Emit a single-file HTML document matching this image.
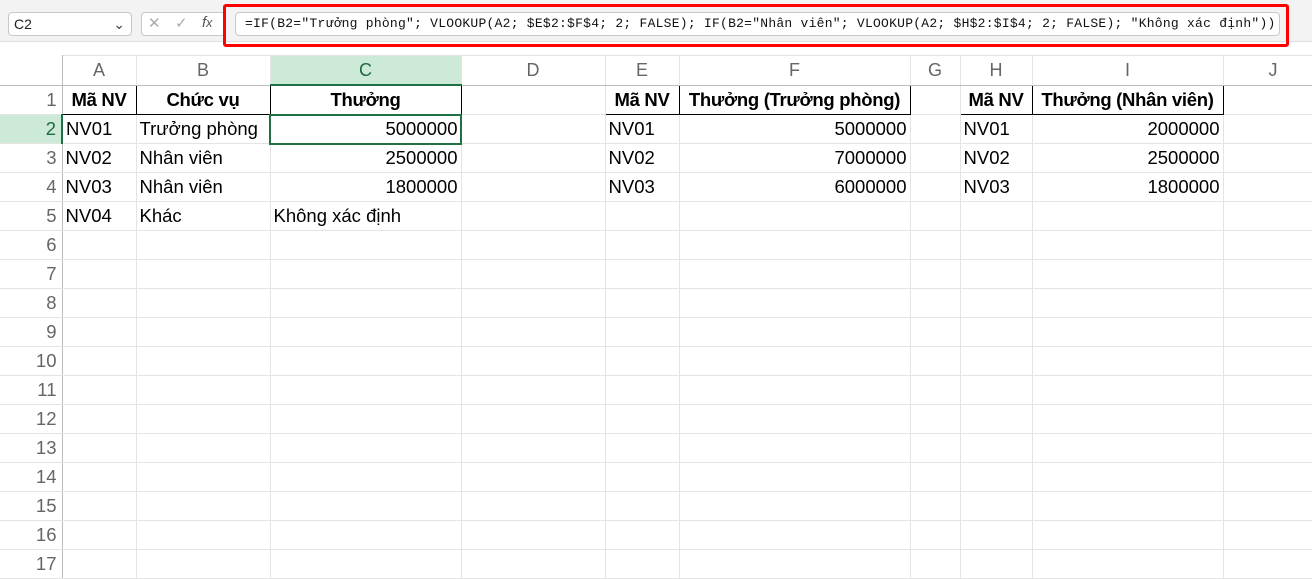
<!DOCTYPE html>
<html><head><meta charset="utf-8"><style>
body{margin:0;width:1312px;height:559px;overflow:hidden;background:#fff;font-family:"Liberation Sans",sans-serif;position:relative}
.top{position:absolute;left:0;top:0;width:1312px;height:41px;background:#f3f3f3;border-bottom:1px solid #e0e0e0}
.nb{position:absolute;left:8px;top:12px;width:124px;height:24px;border:1px solid #c8c8c8;border-radius:4px;background:#fff;font-size:14px;line-height:23px;box-sizing:border-box;padding-left:5px;color:#222}
.fb{position:absolute;left:141px;top:12px;width:84px;height:24px;border:1px solid #c8c8c8;border-radius:4px;background:#fff;box-sizing:border-box;color:#aaa;font-size:15px}
.fx{position:absolute;left:235px;top:12px;width:1045px;height:24px;border:1px solid #c8c8c8;border-radius:4px;background:#fff;box-sizing:border-box;font-family:"Liberation Mono","DejaVu Sans Mono",monospace;font-size:13px;letter-spacing:0.25px;line-height:22px;padding-left:9px;color:#111;white-space:nowrap;overflow:hidden}
.red{position:absolute;left:223px;top:4px;width:1066px;height:43px;border:3px solid #f00;border-radius:3px;box-sizing:border-box}
table{position:absolute;left:0;top:55px;border-collapse:collapse;table-layout:fixed;width:1323px}
td{height:28px;border:1px solid #e4e4e4;padding:0 3px;font-size:18.5px;white-space:nowrap;overflow:hidden;color:#000}
tr.h td{background:#fff;color:#666;text-align:center;font-size:18px;border-color:#e4e4e4;border-bottom:1px solid #bbb}
td.rh{color:#666;text-align:right;padding-right:5px;border-right:1px solid #bbb;border-left:none}
.b{font-weight:bold;text-align:center;border:1px solid #000!important;letter-spacing:-0.3px}
.r{text-align:right}
.sel{background:#cde9d8!important;color:#1e6b3c!important}
.act{outline:2px solid #1e7145;outline-offset:-1px}
</style></head><body>
<div class="top"></div>
<div class="nb">C2<span style="position:absolute;right:6px;top:0;color:#444">⌄</span></div>
<div class="fb"><span style="position:absolute;left:6px;top:1px">✕</span><span style="position:absolute;left:33px;top:1px">✓</span><span style="position:absolute;left:60px;top:1px;color:#555;font-style:italic">f<small>x</small></span></div>
<div class="fx">=IF(B2="Trưởng phòng"; VLOOKUP(A2; $E$2:$F$4; 2; FALSE); IF(B2="Nhân viên"; VLOOKUP(A2; $H$2:$I$4; 2; FALSE); "Không xác định"))</div>
<div class="red"></div>
<div style="position:absolute;left:40px;top:62px;width:0;height:0;border-left:18px solid transparent;border-bottom:18px solid #bbb"></div>
<table>
<colgroup><col style="width:62px"><col style="width:74px"><col style="width:134px"><col style="width:191px"><col style="width:144px"><col style="width:74px"><col style="width:231px"><col style="width:50px"><col style="width:72px"><col style="width:191px"><col style="width:100px"></colgroup>
<tr class="h"><td style="border-right:1px solid #bbb;border-left:none;border-top:none"></td><td>A</td><td>B</td><td class="sel" style="border-bottom:2px solid #1e7145">C</td><td>D</td><td>E</td><td>F</td><td>G</td><td>H</td><td>I</td><td>J</td></tr>
<tr><td class="rh">1</td><td class="b">Mã NV</td><td class="b">Chức vụ</td><td class="b">Thưởng</td><td></td><td class="b">Mã NV</td><td class="b">Thưởng (Trưởng phòng)</td><td></td><td class="b">Mã NV</td><td class="b">Thưởng (Nhân viên)</td><td></td></tr>
<tr><td class="rh sel" style="border-right:2px solid #1e7145">2</td><td>NV01</td><td>Trưởng phòng</td><td class="r act">5000000</td><td></td><td>NV01</td><td class="r">5000000</td><td></td><td>NV01</td><td class="r">2000000</td><td></td></tr>
<tr><td class="rh">3</td><td>NV02</td><td>Nhân viên</td><td class="r">2500000</td><td></td><td>NV02</td><td class="r">7000000</td><td></td><td>NV02</td><td class="r">2500000</td><td></td></tr>
<tr><td class="rh">4</td><td>NV03</td><td>Nhân viên</td><td class="r">1800000</td><td></td><td>NV03</td><td class="r">6000000</td><td></td><td>NV03</td><td class="r">1800000</td><td></td></tr>
<tr><td class="rh">5</td><td>NV04</td><td>Khác</td><td>Không xác định</td><td></td><td></td><td></td><td></td><td></td><td></td><td></td></tr>
<tr><td class="rh">6</td><td></td><td></td><td></td><td></td><td></td><td></td><td></td><td></td><td></td><td></td></tr>
<tr><td class="rh">7</td><td></td><td></td><td></td><td></td><td></td><td></td><td></td><td></td><td></td><td></td></tr>
<tr><td class="rh">8</td><td></td><td></td><td></td><td></td><td></td><td></td><td></td><td></td><td></td><td></td></tr>
<tr><td class="rh">9</td><td></td><td></td><td></td><td></td><td></td><td></td><td></td><td></td><td></td><td></td></tr>
<tr><td class="rh">10</td><td></td><td></td><td></td><td></td><td></td><td></td><td></td><td></td><td></td><td></td></tr>
<tr><td class="rh">11</td><td></td><td></td><td></td><td></td><td></td><td></td><td></td><td></td><td></td><td></td></tr>
<tr><td class="rh">12</td><td></td><td></td><td></td><td></td><td></td><td></td><td></td><td></td><td></td><td></td></tr>
<tr><td class="rh">13</td><td></td><td></td><td></td><td></td><td></td><td></td><td></td><td></td><td></td><td></td></tr>
<tr><td class="rh">14</td><td></td><td></td><td></td><td></td><td></td><td></td><td></td><td></td><td></td><td></td></tr>
<tr><td class="rh">15</td><td></td><td></td><td></td><td></td><td></td><td></td><td></td><td></td><td></td><td></td></tr>
<tr><td class="rh">16</td><td></td><td></td><td></td><td></td><td></td><td></td><td></td><td></td><td></td><td></td></tr>
<tr><td class="rh">17</td><td></td><td></td><td></td><td></td><td></td><td></td><td></td><td></td><td></td><td></td></tr>
</table>
</body></html>
